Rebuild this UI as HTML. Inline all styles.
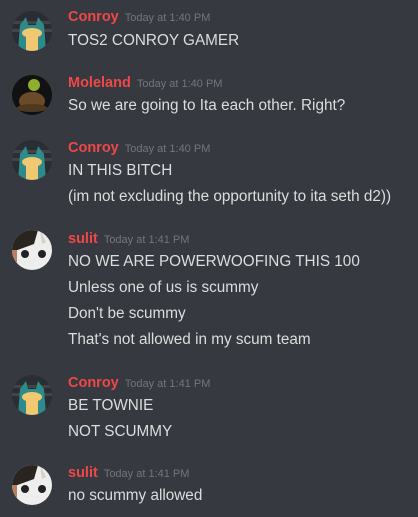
<!DOCTYPE html>
<html><head><style>
html,body{margin:0;padding:0;width:418px;height:517px;background:#36393f;overflow:hidden;font-family:"Liberation Sans",sans-serif}
.a{position:absolute;left:12px;width:40px;height:40px;border-radius:50%;overflow:hidden}
.n{position:absolute;left:68px;color:#f04747;font-size:14.5px;font-weight:bold;white-space:nowrap}
.n span{color:#72767d;font-size:11px;font-weight:normal;margin-left:6px}
.t{position:absolute;left:68px;color:#dcddde;font-size:15.3px;white-space:nowrap}
</style></head><body>
<div class="a" style="top:11px;background:#2a2d33"><svg width="40" height="40"><rect x="0" y="10" width="40" height="3" fill="#444"/><rect x="0" y="18" width="40" height="3" fill="#444"/><path d="M6 40 L8 14 L14 6 L16 14 L24 14 L26 6 L32 14 L34 40Z" fill="#2e8b8b"/><ellipse cx="20" cy="22" rx="10" ry="5" fill="#f0c870"/><rect x="14" y="24" width="12" height="16" fill="#f0c870"/></svg></div>
<div class="n" style="top:9px">Conroy<span>Today at 1:40 PM</span></div>
<div class="t" style="top:32px">TOS2 CONROY GAMER</div>

<div class="a" style="top:75px;background:#111"><svg width="40" height="40"><circle cx="22" cy="10" r="6" fill="#8fae2c"/><ellipse cx="20" cy="26" rx="13" ry="9" fill="#6a4a28"/><ellipse cx="20" cy="33" rx="15" ry="4" fill="#4d3a1e"/></svg></div>
<div class="n" style="top:75px">Moleland<span>Today at 1:40 PM</span></div>
<div class="t" style="top:97px">So we are going to Ita each other. Right?</div>

<div class="a" style="top:140px;background:#2a2d33"><svg width="40" height="40"><rect x="0" y="10" width="40" height="3" fill="#444"/><rect x="0" y="18" width="40" height="3" fill="#444"/><path d="M6 40 L8 14 L14 6 L16 14 L24 14 L26 6 L32 14 L34 40Z" fill="#2e8b8b"/><ellipse cx="20" cy="22" rx="10" ry="5" fill="#f0c870"/><rect x="14" y="24" width="12" height="16" fill="#f0c870"/></svg></div>
<div class="n" style="top:140px">Conroy<span>Today at 1:40 PM</span></div>
<div class="t" style="top:162px">IN THIS BITCH</div>
<div class="t" style="top:188px">(im not excluding the opportunity to ita seth d2))</div>

<div class="a" style="top:230px;background:#eee"><svg width="40" height="40"><path d="M0 0 H26 L22 14 L0 22Z" fill="#2a2420"/><path d="M28 0 L34 12 L30 14Z" fill="#d8d0c0"/><circle cx="13" cy="24" r="4" fill="#222"/><circle cx="30" cy="24" r="4" fill="#222"/><rect x="0" y="20" width="5" height="12" fill="#b88060"/></svg></div>
<div class="n" style="top:231px">sulit<span>Today at 1:41 PM</span></div>
<div class="t" style="top:253px">NO WE ARE POWERWOOFING THIS 100</div>
<div class="t" style="top:279px">Unless one of us is scummy</div>
<div class="t" style="top:305px">Don't be scummy</div>
<div class="t" style="top:331px">That's not allowed in my scum team</div>

<div class="a" style="top:375px;background:#2a2d33"><svg width="40" height="40"><rect x="0" y="10" width="40" height="3" fill="#444"/><rect x="0" y="18" width="40" height="3" fill="#444"/><path d="M6 40 L8 14 L14 6 L16 14 L24 14 L26 6 L32 14 L34 40Z" fill="#2e8b8b"/><ellipse cx="20" cy="22" rx="10" ry="5" fill="#f0c870"/><rect x="14" y="24" width="12" height="16" fill="#f0c870"/></svg></div>
<div class="n" style="top:375px">Conroy<span>Today at 1:41 PM</span></div>
<div class="t" style="top:397px">BE TOWNIE</div>
<div class="t" style="top:423px">NOT SCUMMY</div>

<div class="a" style="top:465px;background:#eee"><svg width="40" height="40"><path d="M0 0 H26 L22 14 L0 22Z" fill="#2a2420"/><path d="M28 0 L34 12 L30 14Z" fill="#d8d0c0"/><circle cx="13" cy="24" r="4" fill="#222"/><circle cx="30" cy="24" r="4" fill="#222"/><rect x="0" y="20" width="5" height="12" fill="#b88060"/></svg></div>
<div class="n" style="top:465px">sulit<span>Today at 1:41 PM</span></div>
<div class="t" style="top:487px">no scummy allowed</div>
</body></html>
